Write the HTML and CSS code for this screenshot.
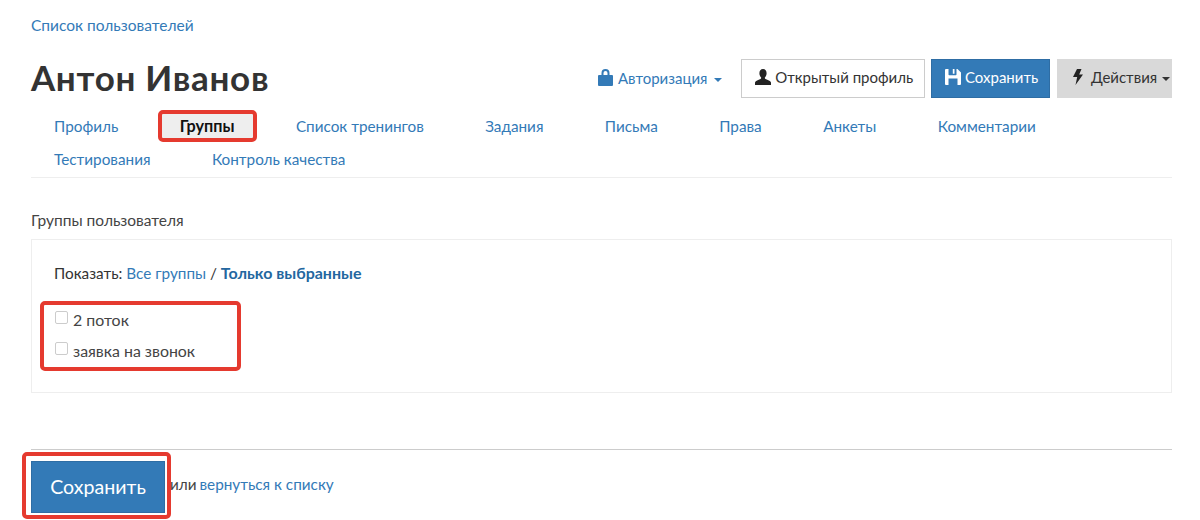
FILE: index.html
```html
<!DOCTYPE html>
<html lang="ru">
<head>
<meta charset="utf-8">
<title>Антон Иванов</title>
<link rel="stylesheet" href="styles.css">
</head>
<body>
<div class="page">
  <a class="crumb" href="#">Список пользователей</a>
  <header class="head">
    <h1 class="title">Антон Иванов</h1>
    <div class="actions">
      <a class="auth" href="#">
        <svg class="ico ico-lock" width="15" height="17" viewBox="0 0 15 17"><path fill="#337ab7" fill-rule="evenodd" d="M3.500 6V4a4 4 0 0 1 8 0v2h2.500a1 1 0 0 1 1 1v9a1 1 0 0 1-1 1H1a1 1 0 0 1-1-1V7a1 1 0 0 1 1-1zm2 0h4V4a2 2 0 0 0-4 0z"/></svg>
        Авторизация <span class="caret"></span></a>
      <a class="btn btn-white" href="#">
        <svg class="ico" width="16" height="16" viewBox="0 0 16 16"><path fill="#222" d="M8 0c2.300 0 3.600 1.800 3.600 4.200 0 1.700-.7 3.200-1.500 4.100-.5.600-.3 1.400.4 1.700 2.300.9 4.900 1.700 5.500 3.400V16H0v-2.600c.6-1.700 3.200-2.500 5.500-3.400.7-.3.900-1.100.4-1.700C5.100 7.400 4.400 5.900 4.400 4.200 4.400 1.800 5.700 0 8 0z"/></svg>
        Открытый профиль</a>
      <a class="btn btn-blue" href="#">
        <svg class="ico" width="16" height="16" viewBox="0 0 16 16"><path fill="#fff" fill-rule="evenodd" d="M1 0h11.500L16 3.500V15a1 1 0 0 1-1 1H1a1 1 0 0 1-1-1V1a1 1 0 0 1 1-1zm2.500 0v5.500a.7.700 0 0 0 .7.700h6.600a.7.700 0 0 0 .7-.7V0H9.500v4.800H7.800V0zM3.500 9.500V16h9V9.500z"/></svg>
        Сохранить</a>
      <a class="btn btn-grey" href="#">
        <svg class="ico ico-bolt" width="10" height="16" viewBox="0 0 10 16"><path fill="#222" d="M4 0h4.500L6.200 5.500H10L2.500 16l1.700-8H0z"/></svg>
        Действия <span class="caret"></span></a>
    </div>
  </header>
  <nav class="tabs">
    <a class="tab" href="#">Профиль</a>
    <a class="tab tab-active" href="#">Группы</a>
    <a class="tab" href="#">Список тренингов</a>
    <a class="tab" href="#">Задания</a>
    <a class="tab" href="#">Письма</a>
    <a class="tab" href="#">Права</a>
    <a class="tab" href="#">Анкеты</a>
    <a class="tab" href="#">Комментарии</a>
    <a class="tab" href="#">Тестирования</a>
    <a class="tab" href="#">Контроль качества</a>
  </nav>
  <p class="section-label">Группы пользователя</p>
  <section class="panel">
    <p class="filter">Показать: <a href="#">Все группы</a> / <a class="filter-on" href="#">Только выбранные</a></p>
    <div class="checks">
      <label class="check"><span class="box"></span>2 поток</label>
      <label class="check"><span class="box"></span>заявка на звонок</label>
    </div>
  </section>
  <footer class="foot">
    <div class="save-mark"><a class="btn-save" href="#">Сохранить</a></div>
    <span class="foot-text">или <a class="foot-link" href="#">вернуться к списку</a></span>
  </footer>
</div>
</body>
</html>
```
FILE: styles.css
```css
* { box-sizing: border-box; }
html, body { margin: 0; padding: 0; background: #fff; }
body {
  font-family: Lato, "Open Sans", "Liberation Sans", sans-serif;
  font-size: 15.5px;
  color: #333;
  height: 520px;
  overflow: hidden;
}
a { color: #337ab7; text-decoration: none; }
.page { width: 1141px; margin-left: 31px; padding-top: 15px; }
.crumb { display: block; height: 20px; line-height: 20px; }
.head {
  display: flex;
  justify-content: space-between;
  align-items: center;
  margin-top: 24px;
  height: 39px;
}
.title { margin: 0; padding-bottom: 4px; font-size: 35px; line-height: 40px; font-weight: 700; letter-spacing: .7px; color: #333; }
.actions { display: flex; align-items: center; font-size: 15px; }
.ico { vertical-align: -2px; }
.ico-lock { margin-right: 1px; }
.ico-bolt { margin-right: 4px; }
.auth { margin: 0 19px 2px 0; }
.auth .caret { margin-left: 3px; }
.caret {
  display: inline-block;
  width: 0; height: 0;
  margin-left: 1px;
  vertical-align: 2px;
  border-top: 4px solid;
  border-left: 4px solid transparent;
  border-right: 4px solid transparent;
}
.btn {
  display: block;
  height: 39px;
  line-height: 35px;
  padding: 0 11px 0 13px;
  border: 1px solid transparent;
  white-space: nowrap;
}
.btn-white { background: #fff; border-color: #ccc; color: #333; }
.btn-blue { background: #337ab7; border-color: #2e6da4; color: #fff; margin-left: 6px; }
.btn-grey { background: #d9d9d9; border-color: #d9d9d9; color: #333; margin-left: 7px; padding: 0 1px 0 15px; }
.tabs {
  display: flex;
  flex-wrap: wrap;
  gap: 5px 21.4px;
  padding: 0 0 4px 3px;
  margin-top: 14px;
  border-bottom: 1px solid #eee;
  font-size: 15.3px;
}
.tab {
  display: block;
  height: 28px;
  line-height: 28px;
  padding: 0 20px;
  white-space: nowrap;
}
.tab-active {
  background: #eee;
  color: #111;
  font-size: 16.2px;
  font-weight: 700;
  border-radius: 3px;
  outline: 4px solid #e53a2f;
  outline-offset: -2px;
}
.section-label { margin: 32px 0 0; line-height: 20px; color: #444; }
.panel {
  margin-top: 9px;
  height: 154px;
  border: 1px solid #eee;
  padding: 23px 22px 0;
}
.filter { margin: 0; line-height: 20px; font-size: 15.3px; }
.filter-on { font-size: 16px; font-weight: 700; color: #23679f; }
.checks {
  width: 201px;
  height: 70px;
  margin: 18px 0 0 -14px;
  padding: 3px 0 0 11px;
  border: 4px solid #e53a2f;
  border-radius: 5px;
}
.check { display: flex; align-items: flex-start; height: 31px; line-height: 24px; font-size: 15.9px; color: #444; }
.box {
  width: 13px; height: 13px;
  margin: 3px 5px 0 0;
  border: 1px solid #ccc;
  border-radius: 2px;
  background: #fff;
}
.foot {
  display: flex;
  align-items: center;
  margin-top: 56px;
  border-top: 1px solid #ccc;
  height: 71px;
}
.save-mark {
  flex: none;
  margin: 1px 0 0 -9px;
  padding: 5px 2px 2px 5px;
  border: 4px solid #e53a2f;
  border-radius: 5px;
}
.btn-save {
  display: block;
  width: 134px;
  height: 52px;
  line-height: 50px;
  text-align: center;
  font-size: 19.6px;
  color: #fff;
  background: #337ab7;
  border: 1px solid #2e6da4;
}
.foot-text { margin: 0 0 3px -1px; font-size: 15.3px; color: #444; }
.foot-link { margin-left: -1px; }
```
